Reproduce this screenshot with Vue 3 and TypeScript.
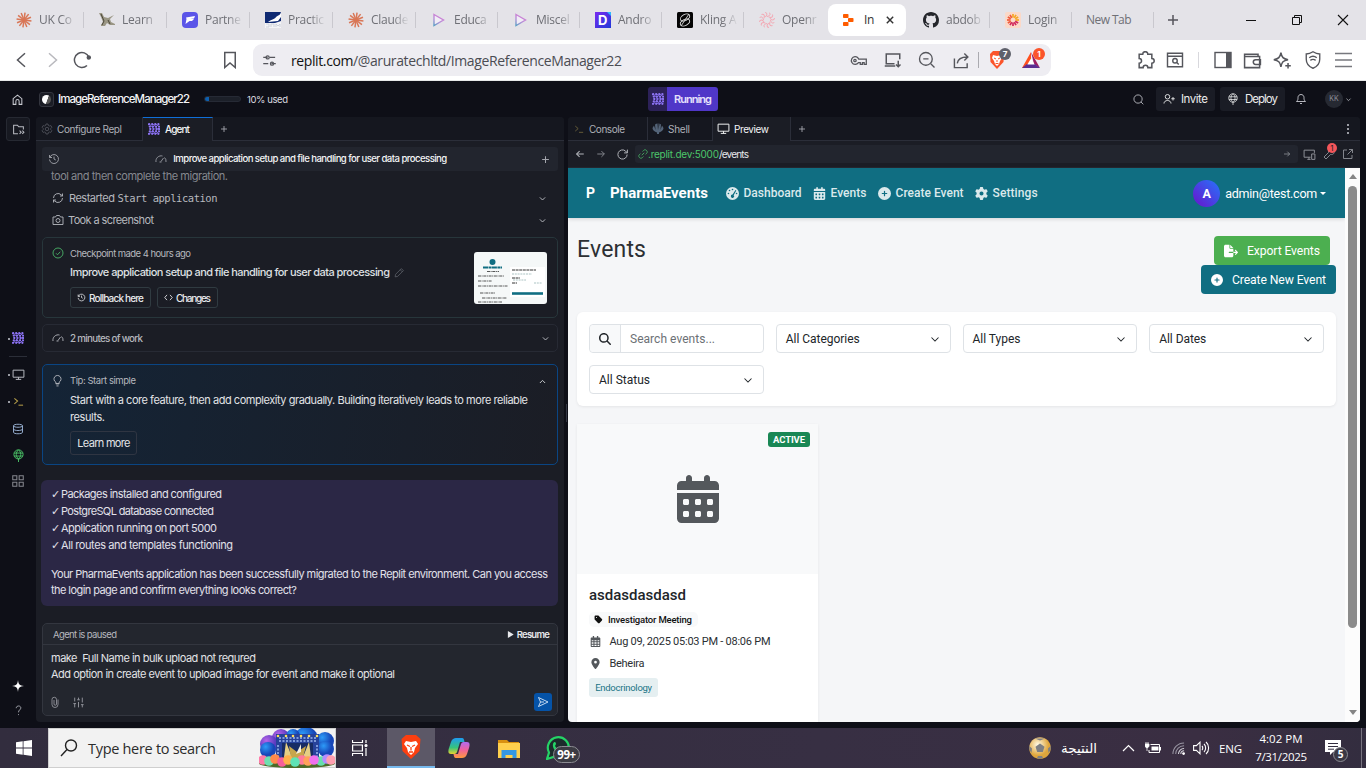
<script setup lang="ts">
import { h } from 'vue'
import type { Directive, FunctionalComponent } from 'vue'

interface Glyph { box?: string; fill?: boolean; d: string[] }

const glyphs: Record<string, Glyph> = {
  home: { d: ['M4 10.500 12 4l8 6.500V21h-5v-6a3 3 0 0 0-6 0v6H4z'] },
  folder: { d: ['M11 20H3V4h7l2.500 3H21v5', 'm14 14 3 3-3 3', 'm19 14 3 3-3 3'] },
  gear: { d: ['M12 8.500a3.500 3.500 0 1 0 0 7 3.500 3.500 0 0 0 0-7z', 'M10 2h4l.8 3 2 1 3-.8 2 3.400-2.200 2.200v2.400l2.200 2.200-2 3.400-3-.8-2 1-.8 3h-4l-.8-3-2-1-3 .8-2-3.400 2.200-2.200v-2.400L2.200 8.600l2-3.400 3 .8 2-1z'] },
  history: { d: ['M3 4v5h5', 'M3.500 9a9 9 0 1 1-.5 4', 'M12 7v5l3.500 2'] },
  gauge: { d: ['M2 18A10.500 10.500 0 0 1 15 6M19 9a10 10 0 0 1 3 9', 'm12 17 5-7', 'M9 18h4'] },
  plus: { d: ['M12 3v18M3 12h18'] },
  sync: { d: ['M3 12a9 9 0 0 1 15.500-6.200L21 8', 'M21 3v5h-5', 'M21 12a9 9 0 0 1-15.500 6.200L3 16', 'M3 21v-5h5'] },
  camera: { d: ['M2 6h5l2-3h6l2 3h5v15H2z', 'M12 9a4 4 0 1 0 0 8 4 4 0 0 0 0-8z'] },
  down: { d: ['m5 9 7 7 7-7'] },
  up: { d: ['m5 16 7-7 7 7'] },
  check: { d: ['M12 2a10 10 0 1 0 0 20 10 10 0 0 0 0-20z', 'm8 12.500 3 3 5.500-6'] },
  pencil: { d: ['M16 3.500 20.500 8 8 20.500 2.500 21.500 3.500 16z', 'm13.500 6 4.500 4.500'] },
  code: { d: ['m8 5-6 7 6 7', 'm16 5 6 7-6 7'] },
  bulb: { d: ['M9 18v-3a6.500 6.500 0 1 1 6 0v3z', 'M9 18h6M10 22h4'] },
  monitor: { d: ['M2 4h20v13H2z', 'M12 17v4M7 21h10'] },
  prompt: { d: ['m3 5 7 6-7 6', 'M12 20h10'] },
  db: { d: ['M3 5.500C3 1.500 21 1.500 21 5.500S3 9.500 3 5.500z', 'M3 5.500v13c0 4 18 4 18 0v-13', 'M3 12c0 4 18 4 18 0'] },
  globe: { d: ['M12 1.500a8.500 8.500 0 1 0 0 17 8.500 8.500 0 0 0 0-17z', 'M4 7.500h16M4 13h16', 'M12 1.500c-5.500 5-5.500 12 0 17 5.500-5 5.500-12 0-17z', 'M12 18v6'] },
  apps: { d: ['M3 3h7v7H3zM14 3h7v7h-7zM3 14h7v7H3zM14 14h7v7h-7z'] },
  spark: { fill: true, d: ['M12 0c1 9 3 11 12 12-9 1-11 3-12 12-1-9-3-11-12-12C9 11 11 9 12 0z'] },
  help: { d: ['M7 7c0-7 11-6 10 0-.6 3.500-5 4-5 9', 'M12 20v2'] },
  clip: { d: ['M18 7v10a6 6 0 0 1-12 0V7a4.500 4.500 0 0 1 9 0v9a2.500 2.500 0 0 1-5 0V8'] },
  sliders: { d: ['M5 3v7M5 14v7M12 3v4M12 11v10M19 3v9M19 16v5', 'M2.500 14h5M9.500 7h5M16.500 16h5'] },
  send: { d: ['M3 3 22 12 3 21 7 12z', 'M7 12h7'] },
  play: { fill: true, d: ['M3 0v24L23 12z'] },
  search: { d: ['M11 2a9 9 0 1 0 0 18 9 9 0 0 0 0-18z', 'm17.500 17.500 5 5'] },
  user: { d: ['M9 3a4.500 4.500 0 1 0 0 9 4.500 4.500 0 0 0 0-9z', 'M2 21c0-8 14-8 14 0', 'M20 8v7M16.500 11.500h7'] },
  bell: { d: ['M3 17c3-3 3-4 3-8 0-8 12-8 12 0 0 4 0 5 3 8z', 'M10 21h4'] },
  left: { d: ['M21 12H4', 'm11 5-7 7 7 7'] },
  right: { d: ['M3 12h17', 'm13 5 7 7-7 7'] },
  reload: { d: ['M20.500 12A8.500 8.500 0 1 1 17.500 5.500L21 9', 'M21 3v6h-6'] },
  link: { d: ['m9 15 6-6', 'm11 6 3-3c4-4 11 3 7 7l-3 3', 'm13 18-3 3c-4 4-11-3-7-7l3-3'] },
  devices: { d: ['M14 17H2V4h19v5', 'M8 21h6M11 17v4', 'M16 11h6v10h-6z'] },
  wrench: { d: ['m6 22 9-9c5 1 9-3 7-7l-4 3-3-3 3-4c-5-1-8 3-7 7l-9 9z'] },
  external: { d: ['M10 4H3v17h17v-7', 'M14 3h7v7', 'm11 13 10-10'] },
  shell: { fill: true, d: ['M10 22v-3c-5-1-9-5-9-9l3-5 3 9-1-11 4-2 1 13 0-13h2l0 13 2-13 3 2-1 11 3-9 3 5c0 4-4 8-9 9v3z'] },
  back: { d: ['m16 3-10 9 10 9'] },
  forward: { d: ['m8 3 10 9-10 9'] },
  bookmark: { d: ['M5 2h14v20l-7-6-7 6z'] },
  tune: { d: ['M9 7H2M22 17h-7', 'M12 7h9M2 17h8', 'M9 4.500a2.500 2.500 0 1 0 0 5 2.500 2.500 0 0 0 0-5z', 'M16 14.500a2.500 2.500 0 1 0 0 5 2.500 2.500 0 0 0 0-5z'] },
  key: { d: ['M7 6.500a5.500 5.500 0 1 0 5 8.500h2.500v2.500h3V15H20v2.500h3V10H12.300A5.500 5.500 0 0 0 7 6.500z', 'M7 10.300a1.700 1.700 0 1 0 0 3.400 1.700 1.700 0 0 0 0-3.400z'] },
  install: { d: ['M21 11V4H3v13h11', 'M1 20h14', 'M19 13v8M16 18l3 3 3-3'] },
  zoomout: { d: ['M10.500 2a8.500 8.500 0 1 0 0 17 8.500 8.500 0 0 0 0-17z', 'm17 17 5 5M7 10.500h7'] },
  share: { d: ['M2 9v13h18v-6', 'M6 16c1-7 6-9 14-9M16 2l5 5-5 5'] },
  puzzle: { d: ['M4 4h4.500a3.200 3.200 0 0 1 6.400 0H20v5.500a3 3 0 0 1 0 6V21h-5a3 3 0 0 0-6 0H4v-5.500a3 3 0 0 0 0-6z'] },
  findpage: { d: ['M2 3h20v18H2zM2 7h20', 'M12 10a3 3 0 1 0 0 6 3 3 0 0 0 0-6z', 'm14 15 3 3'] },
  wallet: { d: ['M2 7V4h17v3M2 7h19v14H2z', 'M22 11h-6a3 3 0 0 0 0 6h6z'] },
  star: { d: ['M10 2c1 6 3 8 9 9-6 1-8 3-9 9-1-6-3-8-9-9 6-1 8-3 9-9z', 'M19 15v7M15.500 18.500h7'] },
  shield: { d: ['M12 1c3 2 6 3 9 3v7c0 6-4 10-9 12-5-2-9-6-9-12V4c3 0 6-1 9-3z', 'M7 9c3-2.500 7-2.500 10 0M8.500 12.500c2-1.500 5-1.500 7 0M12 16h.1'] },
  calendar: { box: '0 0 448 512', fill: true, d: ['M128 0c17.700 0 32 14.300 32 32V64H288V32c0-17.700 14.300-32 32-32s32 14.300 32 32V64h48c26.500 0 48 21.500 48 48v48H0V112C0 85.500 21.500 64 48 64H96V32c0-17.700 14.300-32 32-32zM0 192H448V464c0 26.500-21.500 48-48 48H48c-26.500 0-48-21.500-48-48V192zm64 80v32c0 8.800 7.200 16 16 16h32c8.800 0 16-7.200 16-16V272c0-8.800-7.200-16-16-16H80c-8.800 0-16 7.200-16 16zm128 0v32c0 8.800 7.200 16 16 16h32c8.800 0 16-7.200 16-16V272c0-8.800-7.200-16-16-16H208c-8.800 0-16 7.200-16 16zm144-16c-8.800 0-16 7.200-16 16v32c0 8.800 7.200 16 16 16h32c8.800 0 16-7.200 16-16V272c0-8.800-7.200-16-16-16H336zM64 400v32c0 8.800 7.200 16 16 16h32c8.800 0 16-7.200 16-16V400c0-8.800-7.200-16-16-16H80c-8.800 0-16 7.200-16 16zm144-16c-8.800 0-16 7.200-16 16v32c0 8.800 7.200 16 16 16h32c8.800 0 16-7.200 16-16V400c0-8.800-7.200-16-16-16H208zm112 16v32c0 8.800 7.200 16 16 16h32c8.800 0 16-7.200 16-16V400c0-8.800-7.200-16-16-16H336c-8.800 0-16 7.200-16 16z'] },
  calgrid: { box: '0 0 448 512', fill: true, d: ['M96 0h64v64h128V0h64v64h48c26 0 48 21 48 48v352c0 26-22 48-48 48H48c-26 0-48-22-48-48V112c0-27 22-48 48-48h48zM48 192v56h80v-56zm128 0v56h96v-56zm144 0v56h80v-56zM48 296v64h80v-64zm128 0v64h96v-64zm144 0v64h80v-64zM48 408v56h80v-56zm128 0v56h96v-56zm144 0v56h80v-56z'] },
  glass: { box: '0 0 512 512', fill: true, d: ['M416 208c0 45.900-14.900 88.300-40 122.700L502.600 457.400c12.500 12.500 12.500 32.800 0 45.300s-32.800 12.500-45.300 0L330.700 376c-34.400 25.200-76.800 40-122.700 40C93.100 416 0 322.900 0 208S93.100 0 208 0S416 93.100 416 208zM208 352a144 144 0 1 0 0-288 144 144 0 1 0 0 288z'] },
  addcircle: { box: '0 0 512 512', fill: true, d: ['M256 512A256 256 0 1 0 256 0a256 256 0 1 0 0 512zM232 344V280H168c-13.300 0-24-10.700-24-24s10.700-24 24-24h64V168c0-13.300 10.700-24 24-24s24 10.700 24 24v64h64c13.300 0 24 10.700 24 24s-10.700 24-24 24H280v64c0 13.300-10.700 24-24 24s-24-10.700-24-24z'] },
  pin: { box: '0 0 384 512', fill: true, d: ['M215.700 499.200C267 435 384 279.400 384 192C384 86 298 0 192 0S0 86 0 192c0 87.400 117 243 168.300 307.200c12.300 15.300 35.100 15.300 47.400 0zM192 128a64 64 0 1 1 0 128 64 64 0 1 1 0-128z'] },
  tag: { box: '0 0 448 512', fill: true, d: ['M0 80V229.500c0 17 6.700 33.300 18.700 45.300l176 176c25 25 65.500 25 90.500 0L418.700 317.300c25-25 25-65.500 0-90.500l-176-176c-12-12-28.300-18.700-45.300-18.700H48C21.500 32 0 53.500 0 80zm112 32a32 32 0 1 1 0 64 32 32 0 1 1 0-64z'] },
  cog: { box: '0 0 512 512', fill: true, d: ['M495.900 166.600c3.200 8.700 .5 18.400-6.400 24.600l-43.300 39.400c1.100 8.300 1.700 16.800 1.700 25.400s-.6 17.100-1.700 25.400l43.300 39.400c6.900 6.200 9.600 15.900 6.400 24.600c-4.400 11.900-9.700 23.300-15.800 34.300l-4.700 8.100c-6.600 11-14 21.400-22.100 31.200c-5.900 7.200-15.700 9.600-24.500 6.800l-55.700-17.700c-13.400 10.300-28.200 18.900-44 25.400l-12.500 57.100c-2 9.100-9 16.300-18.200 17.800c-13.800 2.300-28 3.500-42.500 3.500s-28.700-1.200-42.500-3.500c-9.200-1.500-16.200-8.700-18.200-17.800l-12.500-57.100c-15.800-6.500-30.600-15.100-44-25.400L83.100 425.900c-8.800 2.800-18.600 .3-24.500-6.800c-8.100-9.800-15.500-20.200-22.100-31.200l-4.700-8.100c-6.100-11-11.400-22.400-15.800-34.300c-3.200-8.700-.5-18.400 6.400-24.600l43.300-39.400C64.600 273.100 64 264.600 64 256s.6-17.100 1.700-25.400L22.400 191.200c-6.900-6.200-9.600-15.900-6.400-24.600c4.400-11.900 9.700-23.300 15.800-34.300l4.700-8.100c6.600-11 14-21.400 22.100-31.200c5.900-7.200 15.700-9.600 24.500-6.800l55.700 17.700c13.400-10.300 28.200-18.900 44-25.400l12.500-57.100c2-9.100 9-16.300 18.200-17.800C227.300 1.200 241.500 0 256 0s28.700 1.200 42.500 3.500c9.200 1.500 16.200 8.700 18.200 17.800l12.500 57.100c15.800 6.500 30.600 15.100 44 25.400l55.700-17.700c8.800-2.800 18.600-.3 24.500 6.800c8.100 9.800 15.500 20.200 22.100 31.200l4.700 8.100c6.100 11 11.400 22.400 15.800 34.300zM256 336a80 80 0 1 0 0-160 80 80 0 1 0 0 160z'] },
  dash: { box: '0 0 24 24', fill: true, d: ['M12 0a12 12 0 1 0 0 24 12 12 0 0 0 0-24zM12 3a1.500 1.500 0 1 1 0 3 1.500 1.500 0 0 1 0-3zM6.500 5a1.500 1.500 0 1 1 0 3 1.500 1.500 0 0 1 0-3zM4.500 10.500a1.500 1.500 0 1 1 0 3 1.500 1.500 0 0 1 0-3zM19.500 10.500a1.500 1.500 0 1 1 0 3 1.500 1.500 0 0 1 0-3zM17.500 5.500l1.500 1-4.800 8.500a3 3 0 1 1-2-1z'] },
  exportfile: { box: '0 0 576 512', fill: true, d: ['M0 64C0 29 29 0 64 0h160v128c0 18 14 32 32 32h128v128H216c-13 0-24 11-24 24s11 24 24 24h168v112c0 35-29 64-64 64H64c-35 0-64-29-64-64zM384 336v-48h110l-39-39c-10-10-10-25 0-34s24-9 34 0l80 80c9 9 9 24 0 34l-80 80c-10 9-25 9-34 0s-10-25 0-34l39-39zM384 128H256V0z'] },
  github: { box: '0 0 16 16', fill: true, d: ['M8 0C3.580 0 0 3.580 0 8c0 3.540 2.290 6.530 5.470 7.590.4.070.55-.17.55-.38 0-.19-.01-.82-.01-1.490-2.010.37-2.530-.49-2.690-.94-.09-.23-.48-.94-.82-1.130-.28-.15-.68-.52-.01-.53.63-.01 1.080.58 1.230.82.72 1.210 1.870.87 2.330.66.07-.52.28-.87.51-1.070-1.780-.2-3.640-.89-3.640-3.950 0-.87.31-1.590.82-2.150-.08-.2-.36-1.020.08-2.120 0 0 .67-.21 2.200.82.64-.18 1.320-.27 2-.27s1.360.09 2 .27c1.530-1.040 2.200-.82 2.200-.82.44 1.100.16 1.920.08 2.120.51.56.82 1.270.82 2.150 0 3.070-1.870 3.750-3.650 3.950.29.25.54.73.54 1.480 0 1.070-.01 1.930-.01 2.200 0 .21.15.46.55.38A8.010 8.010 0 0 0 16 8c0-4.420-3.580-8-8-8z'] },
}

const Ic: FunctionalComponent<{ n: string; s?: number; w?: number }> = (props) => {
  const g = glyphs[props.n]
  const size = props.s ?? 12
  return h(
    'svg',
    {
      viewBox: g.box ?? '0 0 24 24', width: size, height: size,
      fill: g.fill ? 'currentColor' : 'none', stroke: g.fill ? 'none' : 'currentColor',
      'stroke-width': props.w ?? 1.8, 'fill-rule': 'evenodd',
    },
    g.d.map((d) => h('path', { d })),
  )
}
Ic.props = ['n', 's', 'w']

const shifts = [0, 0.7, 1.2, 0.7, 0]
const agentDots: number[][] = []
shifts.forEach((shift, row) => {
  for (let col = 0; col < 4; col++) agentDots.push([Math.min(11, 1.1 + col * 3.1 + shift), 1.2 + row * 2.4])
})
const AgentMark: FunctionalComponent = () =>
  h('svg', { viewBox: '0 0 12 12', width: 12, height: 12, fill: 'none', stroke: '#8168ec', 'stroke-width': 0.9 }, [
    ...agentDots.map(([x, y]) => h('circle', { cx: x, cy: y, r: 1.15, fill: '#8f76f5', stroke: 'none' })),
    h('path', { d: 'M1.500 1 6 6l-4.500 5M5 1l4.500 5L5 11M8 1l3 3M8 11l3-3' }),
  ])

// Adjusts tracking so that a label spans the given number of pixels.
const vFit: Directive<HTMLElement, number> = {
  mounted(el, binding) {
    const width = el.getBoundingClientRect().width
    const count = (el.textContent ?? '').trim().length
    if (count > 1) el.style.letterSpacing = `${(binding.value - width) / (count - 1)}px`
  },
}

const tabs = [
  { icon: 'burst', label: 'UK Co' }, { icon: 'learn', label: 'Learn' }, { icon: 'partner', label: 'Partne' },
  { icon: 'practic', label: 'Practic' }, { icon: 'burst', label: 'Claude' }, { icon: 'playmark', label: 'Educa' },
  { icon: 'playmark', label: 'Miscel' }, { icon: 'dmark', label: 'Andro' }, { icon: 'kling', label: 'Kling A' },
  { icon: 'swirl', label: 'Openr' }, { icon: 'replit', label: 'In', active: true }, { icon: 'github', label: 'abdob' },
  { icon: 'login', label: 'Login' }, { icon: '', label: 'New Tab' },
]
const rays = Array.from({ length: 12 }, (_, i) => i * 30)
const selects = [
  { label: 'All Categories', width: 74 }, { label: 'All Types', width: 48 }, { label: 'All Dates', width: 47 }, { label: 'All Status', width: 51 },
]
const done = [
  { text: 'Packages installed and configured', width: 161 }, { text: 'PostgreSQL database connected', width: 153 },
  { text: 'Application running on port 5000', width: 156 }, { text: 'All routes and templates functioning', width: 172 },
]
const balloons = [
  { x: 3, y: 33, c: '#ff7aa8' }, { x: 9, y: 34, c: '#6ee0b0' }, { x: 15, y: 32, c: '#ff8a4c' }, { x: 22, y: 35, c: '#f75f9b' },
  { x: 28, y: 33, c: '#ffb04a' }, { x: 42, y: 33, c: '#ff7a9c' }, { x: 48, y: 34, c: '#ffa25a' }, { x: 35, y: 35, c: '#5fe3b5' },
  { x: 61, y: 34, c: '#66dfad' }, { x: 54, y: 33, c: '#f070ee' }, { x: 67, y: 32, c: '#b38cff' }, { x: 71, y: 33, c: '#ff9fb0' },
]
</script>

<template>
  <div class="screen">
    <div class="tabstrip">
      <div v-for="(t, i) in tabs" :key="i" class="btab" :class="{ on: t.active, pre: i === 9, bare: !t.icon }">
        <span v-if="t.icon" class="fav" :class="t.icon">
          <svg v-if="t.icon === 'burst'" viewBox="-8 -8 16 16"><path v-for="r in rays" :key="r" d="M0 0V-7.500" stroke="#d97757" stroke-width="1.500" :transform="`rotate(${r + 8})`" /></svg>
          <svg v-else-if="t.icon === 'learn'" viewBox="0 0 16 16"><path d="M0 1h3l2 4 4 1 6-3-4 4 1 3 4 2v1h-5l-3-2-2 3H2v-1l2-3-2-5z" fill="#9a9684" /><path d="m2 2 3 7-2 4M9 8l2 4" stroke="#4a4638" fill="none" /></svg>
          <svg v-else-if="t.icon === 'partner'" viewBox="0 0 16 16"><rect width="16" height="16" rx="4" fill="#5b55e8" /><path d="M4 5.500 13 4l-1 2.500-4 .5h4l-2 2H7.500l-4 3 1-5z" fill="#fff" /></svg>
          <svg v-else-if="t.icon === 'practic'" viewBox="0 0 16 16"><path d="M0 0h16v16H0z" fill="#f4f4f6" /><path d="M0 0h16v9L10 11H0z" fill="#0f2a73" /><path d="M16 0c-1 4-3 3-5 5-1 2-4 2-8 5l10-1 3-4z" fill="#fff" /><path d="M1 12h3v3H1M6 15v-3h3v3M11 15v-3l2 2 2-2v3" stroke="#cfd3dc" fill="none" /></svg>
          <svg v-else-if="t.icon === 'playmark'" viewBox="0 0 16 16"><defs><linearGradient id="pg" x1=".5" y1="0" x2="0" y2="1"><stop stop-color="#d47bd4" /><stop offset=".5" stop-color="#b78fd8" /><stop offset="1" stop-color="#5b9fc4" /></linearGradient></defs><path d="M3 2.500 12.500 8 3 13.500z" fill="#f1edf6" stroke="url(#pg)" stroke-width="1.400" /></svg>
          <svg v-else-if="t.icon === 'dmark'" viewBox="0 0 16 16"><defs><linearGradient id="dg" x2="1" y2="1"><stop stop-color="#7a2cf0" /><stop offset="1" stop-color="#2038d8" /></linearGradient></defs><path d="M0 0h16v16H0z" fill="url(#dg)" /><path d="M12 0h4v4z" fill="#30b8ff" /><text x="3" y="12.600" font-size="13" font-weight="700" fill="#fff" font-family="Inter, sans-serif">D</text></svg>
          <svg v-else-if="t.icon === 'kling'" viewBox="0 0 16 16"><rect width="16" height="16" rx="1.500" fill="#050505" /><g fill="none" stroke="#ddd" stroke-width=".9"><ellipse cx="8" cy="5.500" rx="5" ry="3" transform="rotate(-30 8 5.500)" /><ellipse cx="8" cy="10.500" rx="5" ry="3" transform="rotate(-30 8 10.500)" /><path d="m12 2-8 12" /></g></svg>
          <svg v-else-if="t.icon === 'swirl'" viewBox="-8 -8 16 16"><path v-for="r in rays" :key="r" d="M0-3.500C3-4 4-6 2-7.500" fill="none" stroke="#f3a9b4" :transform="`rotate(${r})`" /></svg>
          <svg v-else-if="t.icon === 'replit'" viewBox="0 0 16 16" fill="#ff5c00"><rect x="2" y="2" width="5.500" height="4" rx=".8" /><rect x="7" y="6" width="5.500" height="4" rx=".8" /><rect x="2" y="10" width="5.500" height="4" rx=".8" /></svg>
          <Ic v-else-if="t.icon === 'github'" n="github" :s="16" />
          <svg v-else viewBox="-8 -8 16 16"><rect x="-8" y="-8" width="16" height="16" rx="2" fill="#fbd9c8" /><path v-for="r in rays" :key="r" d="M0-2.500V-6" :stroke="r < 120 ? '#f5a623' : r < 240 ? '#d1265b' : '#ef5a3c'" stroke-width="1.700" :transform="`rotate(${r})`" /></svg>
        </span>
        <span class="blabel">{{ t.label }}</span>
        <svg v-if="t.active" class="bx" viewBox="0 0 10 10"><path d="m1 1 8 8M9 1 1 9" stroke="#333" stroke-width="1.800" /></svg>
      </div>
      <svg class="newtab" viewBox="0 0 12 12"><path d="M6 1v10M1 6h10" stroke="#55565c" stroke-width="1.500" /></svg>
      <div class="winbtns">
        <svg viewBox="0 0 12 12"><path d="M1 6.500h10" stroke="#111" /></svg>
        <svg viewBox="0 0 12 12" fill="none" stroke="#111"><path d="M1.500 3.500h7v7h-7zM3.500 3.500v-2h7v7h-2" /></svg>
        <svg viewBox="0 0 12 12"><path d="m1 1 10 10M11 1 1 11" stroke="#111" stroke-width="1.100" /></svg>
      </div>
    </div>

    <div class="toolbar">
      <div class="nav">
        <Ic n="back" :s="18" :w="2" /><Ic n="forward" :s="18" :w="2" class="dim" />
        <svg viewBox="0 0 18 18" width="18" height="18" fill="none" stroke="#55565c" stroke-width="1.500"><path d="M14 14.500A7.500 7.500 0 1 1 15.800 6" /><circle cx="15.800" cy="6.500" r="1.500" fill="#55565c" /></svg>
      </div>
      <Ic n="bookmark" :s="18" :w="2" />
      <div class="omni">
        <Ic n="tune" :s="15" :w="2" />
        <span class="addr"><span v-fit="331"><b>replit.com</b>/@aruratechltd/ImageReferenceManager22</span></span>
        <Ic n="key" :s="17" :w="1.8" class="k1" /><Ic n="install" :s="18" :w="2" class="k2" /><Ic n="zoomout" :s="18" :w="1.8" class="k3" /><Ic n="share" :s="17" :w="2" class="k4" />
        <i class="bar"></i>
        <span class="brave">
          <svg viewBox="0 0 16 18" width="16" height="18"><path d="M4 0h8l3 3-.500 8L8 18l-6.500-7L1 3z" fill="#fb542b" /><path d="m4 4 4 1 4-1 1 3-2 3-1 3-2 2-2-2-1-3-2-3z" fill="#fff" /><path d="m5 7 2 1M11 7 9 8M8 9v2M6.500 12.500h3" stroke="#fb542b" /></svg>
          <em>7</em>
        </span>
        <span class="bat">
          <svg viewBox="0 0 18 16" width="18" height="16"><path d="M9 0 0 16h9z" fill="#ff4f1e" /><path d="m9 0 9 16-6-4z" fill="#9e1f63" /><path d="M0 16h18l-5-4H5z" fill="#5b2e91" /><path d="m9 6.500-3.700 6h7.400z" fill="#fff" /></svg>
          <em>1</em>
        </span>
      </div>
      <div class="tools">
        <Ic n="puzzle" :s="19" :w="1.900" /><Ic n="findpage" :s="18" :w="1.900" class="t2" /><i></i>
        <svg viewBox="0 0 18 18" width="18" height="18"><rect x="1" y="1.500" width="16" height="15" fill="none" stroke="#55565c" stroke-width="1.400" /><path d="M12 2h5v14h-5z" fill="#55565c" /></svg>
        <Ic n="wallet" :s="19" :w="1.900" class="t4" /><Ic n="star" :s="19" :w="1.900" class="t4" /><Ic n="shield" :s="18" :w="1.800" class="t5" />
        <svg viewBox="0 0 18 16" width="18" height="16" class="t6"><path d="M0 1.500h17M0 8h17M0 14.500h17" stroke="#77787e" stroke-width="1.700" /></svg>
      </div>
    </div>

    <div class="ide">
      <div class="idehead">
        <div class="hl">
          <Ic n="home" :s="13" :w="1.900" />
          <span class="logo"><i></i></span>
          <span v-fit="132" class="proj">ImageReferenceManager22</span>
          <span class="meter"><i></i></span>
          <span v-fit="41" class="used">10% used</span>
        </div>
        <div class="run"><span class="runmark"><AgentMark /></span><span class="runtext"><span v-fit="38">Running</span></span></div>
        <div class="hr">
          <Ic n="search" :s="11" />
          <span class="hbtn inv"><Ic n="user" :s="12" /><span v-fit="27">Invite</span></span>
          <span class="hbtn dep"><Ic n="globe" :s="12" :w="1.500" /><span v-fit="33">Deploy</span></span>
          <Ic n="bell" :s="12" class="hb" />
          <span class="kk">KK</span><Ic n="down" :s="7" :w="2.500" class="hc" />
        </div>
      </div>

      <div class="work">
        <div class="rail">
          <span class="rbox"><Ic n="folder" :s="13" :w="1.900" /></span>
          <div class="rlist">
            <span class="ri dot"><AgentMark /></span>
            <hr />
            <span class="ri dot"><Ic n="monitor" :s="13" /></span>
            <span class="ri dot gold"><Ic n="prompt" :s="11" :w="2.200" /></span>
            <span class="ri blue"><Ic n="db" :s="12" /></span>
            <span class="ri leaf"><Ic n="globe" :s="13" :w="1.700" /></span>
            <span class="ri grey"><Ic n="apps" :s="14" :w="1.800" /></span>
          </div>
          <span class="ri star"><Ic n="spark" :s="12" /></span>
          <span class="ri"><Ic n="help" :s="11" /></span>
        </div>

        <section class="pane lpane">
          <div class="ptabs">
            <span class="pt cfg"><Ic n="gear" :s="12" :w="1.500" class="dimmer" /><span v-fit="65">Configure Repl</span></span>
            <span class="pt agent"><AgentMark /><span v-fit="25">Agent</span></span>
            <span class="pplus"><Ic n="plus" :s="8" :w="2.500" /></span>
          </div>
          <div class="chathead"><Ic n="history" :s="12" /><div class="mid"><Ic n="gauge" :s="12" /><span v-fit="274">Improve application setup and file handling for user data processing</span></div><Ic n="plus" :s="9" :w="2.700" /></div>
          <div class="chat">
            <div class="cut"><span v-fit="177">tool and then complete the migration.</span></div>
            <div class="step"><Ic n="sync" :s="12" /><span v-fit="46">Restarted</span><code v-fit="100">Start application</code><Ic n="down" :s="9" :w="2.600" class="end" /></div>
            <div class="step"><Ic n="camera" :s="12" /><span v-fit="86" class="s2">Took a screenshot</span><Ic n="down" :s="9" :w="2.600" class="end" /></div>

            <div class="check">
              <Ic n="check" :s="12" class="ok" />
              <div class="cbody">
                <div class="clabel"><span v-fit="121">Checkpoint made 4 hours ago</span></div>
                <div class="ctitle"><span v-fit="320">Improve application setup and file handling for user data processing</span><Ic n="pencil" :s="11" :w="1.600" /></div>
                <div class="cbtns"><span class="b1"><Ic n="history" :s="9" :w="2" /><span v-fit="55">Rollback here</span></span><span class="b2"><Ic n="code" :s="9" :w="2.300" /><span v-fit="35">Changes</span></span></div>
              </div>
              <svg class="thumb" viewBox="0 0 73 52">
                <rect width="73" height="52" rx="3" fill="#f5f8f8" /><circle cx="18.500" cy="10" r="3" fill="#106e82" />
                <path d="M9 15.500h19" stroke="#106e82" stroke-width="2" stroke-dasharray="5 .5 3 .4" />
                <path d="M4 24h26M4 29h14M4 34h30M6 41h15M8 46h25M4 50h24M13 19.500h12" stroke="#444" stroke-width=".9" stroke-dasharray="3 .6 1 .7" />
                <rect x="36" y="15" width="35" height="30" fill="#fff" /><path d="M38 18h24M38 26h8M38 31h5" stroke="#333" stroke-dasharray="3 .6" /><path d="M38 41.500h31" stroke="#106e82" stroke-width="2.600" /><path d="M38 22h20M39 28h13M60 31h8" stroke="#8aa" stroke-width=".7" stroke-dasharray="2 .8" />
              </svg>
            </div>

            <div class="mins"><Ic n="gauge" :s="12" /><span v-fit="73">2 minutes of work</span><Ic n="down" :s="9" :w="2.600" class="end" /></div>

            <div class="tip">
              <Ic n="bulb" :s="13" :w="1.500" />
              <div class="tbody">
                <div class="tlabel"><span v-fit="66">Tip: Start simple</span></div>
                <div class="ttext"><span v-fit="458">Start with a core feature, then add complexity gradually. Building iteratively leads to more reliable</span><br /><span v-fit="35">results.</span></div>
                <span class="tbtn"><span v-fit="53">Learn more</span></span>
              </div>
              <Ic n="up" :s="9" :w="2.600" />
            </div>

            <div class="msg">
              <div v-for="d in done" :key="d.text" class="ml"><i>✓</i><span v-fit="d.width">{{ d.text }}</span></div>
              <div class="mp"><span v-fit="497">Your PharmaEvents application has been successfully migrated to the Replit environment. Can you access</span><br /><span v-fit="246">the login page and confirm everything looks correct?</span></div>
            </div>
          </div>

          <div class="compose">
            <div class="chead"><span v-fit="64">Agent is paused</span><span class="res"><Ic n="play" :s="7" /><span v-fit="33">Resume</span></span></div>
            <div class="ctext"><span v-fit="205">make&nbsp; Full Name in bulk upload not requred</span><br /><span v-fit="344">Add option in create event to upload image for event and make it optional</span></div>
            <div class="cfoot"><Ic n="clip" :s="12" :w="1.700" /><Ic n="sliders" :s="13" :w="1.700" /><span class="send"><Ic n="send" :s="12" :w="1.800" /></span></div>
          </div>
        </section>

        <div class="gutter"><i></i></div>

        <section class="pane rpane">
          <div class="ptabs">
            <span class="pt con"><Ic n="prompt" :s="10" class="goldd" /><span v-fit="36">Console</span></span>
            <span class="pt she"><Ic n="shell" :s="12" class="shc" /><span v-fit="22">Shell</span></span>
            <span class="pt pre2"><Ic n="monitor" :s="13" /><span v-fit="35">Preview</span></span>
            <span class="pplus"><Ic n="plus" :s="8" :w="2.500" /></span>
            <span class="kebab"><i></i><i></i><i></i></span>
          </div>
          <div class="urlbar">
            <Ic n="left" :s="10" :w="2.500" /><Ic n="right" :s="10" :w="2.300" class="r" /><Ic n="reload" :s="13" />
            <div class="url"><Ic n="link" :s="10" class="lk" /><span class="host"><span v-fit="71">.replit.dev:5000</span></span><span v-fit="30" class="path">/events</span><Ic n="right" :s="8" :w="2.200" class="go" /></div>
            <Ic n="devices" :s="13" class="d1" /><span class="wr"><Ic n="wrench" :s="12" /><em>1</em></span><Ic n="external" :s="12" class="ex" />
          </div>

          <div class="view">
            <div class="page">
              <nav class="topnav">
                <b class="p">P</b><b v-fit="98" class="brand">PharmaEvents</b>
                <span class="ni n1"><Ic n="dash" :s="13" /><span v-fit="58">Dashboard</span></span>
                <span class="ni n2"><Ic n="calendar" :s="13" /><span v-fit="36">Events</span></span>
                <span class="ni n3"><Ic n="addcircle" :s="13" /><span v-fit="68">Create Event</span></span>
                <span class="ni n4"><Ic n="cog" :s="13" /><span v-fit="45">Settings</span></span>
                <span class="ava">A</span><span v-fit="92" class="mail">admin@test.com</span><i class="caret"></i>
              </nav>
              <div class="phead">
                <h2><span v-fit="69">Events</span></h2>
                <div class="pbtns">
                  <span class="pb export"><Ic n="exportfile" :s="14" /><span v-fit="73">Export Events</span></span>
                  <span class="pb create"><Ic n="addcircle" :s="12" /><span v-fit="94">Create New Event</span></span>
                </div>
              </div>
              <div class="filters">
                <div class="sbox"><span><Ic n="glass" :s="12" /></span><label><span v-fit="85">Search events...</span></label></div>
                <div v-for="s in selects" :key="s.label" class="sel"><span v-fit="s.width">{{ s.label }}</span><Ic n="down" :s="12" :w="2.100" /></div>
              </div>
              <article class="card">
                <div class="pic"><Ic n="calendar" :s="48" /><span class="act"><span v-fit="32">ACTIVE</span></span></div>
                <div class="cb">
                  <h5><span v-fit="97">asdasdasdasd</span></h5>
                  <span class="cat"><Ic n="tag" :s="9" /><span v-fit="84">Investigator Meeting</span></span>
                  <div class="row"><Ic n="calgrid" :s="11" /><span v-fit="161">Aug 09, 2025 05:03 PM - 08:06 PM</span></div>
                  <div class="row r2"><Ic n="pin" :s="11" /><span v-fit="35">Beheira</span></div>
                  <span class="topic"><span v-fit="57">Endocrinology</span></span>
                </div>
              </article>
            </div>
            <div class="scroll"><i class="su"></i><i class="thumbbar"></i><i class="sd"></i></div>
          </div>
        </section>
      </div>
    </div>

    <div class="taskbar">
      <span class="start"><svg viewBox="0 0 16 16" width="16" height="16" fill="#fff"><path d="M0 2.200 6.700 1.300v6.300H0zM7.500 1.200 16 0v7.600H7.500zM0 8.400h6.700v6.300L0 13.800zM7.500 8.400H16V16l-8.500-1.200z" /></svg></span>
      <div class="tsearch">
        <svg viewBox="0 0 18 18" width="18" height="18" fill="none" stroke="#222" stroke-width="1.400"><circle cx="11" cy="6.500" r="5.500" /><path d="m7 10.500-6 6.500" /></svg>
        <div class="ttype"><span v-fit="128">Type here to search</span></div>
        <svg viewBox="0 0 76 40" width="76" height="40">
          <defs>
            <radialGradient id="bb" cx=".35" cy=".3"><stop stop-color="#2d9bf8" /><stop offset="1" stop-color="#1746b8" /></radialGradient>
            <radialGradient id="bp" cx=".35" cy=".3"><stop stop-color="#b765e8" /><stop offset="1" stop-color="#5b3cc0" /></radialGradient>
          </defs>
          <ellipse cx="38" cy="35.500" rx="38" ry="4.500" fill="#4d6b28" />
          <circle cx="22" cy="10" r="9" fill="url(#bp)" /><circle cx="47" cy="11" r="12" fill="url(#bb)" /><circle cx="66" cy="13" r="9" fill="url(#bb)" />
          <circle cx="10" cy="16" r="9" fill="url(#bp)" /><circle cx="9" cy="22" r="8" fill="url(#bb)" /><circle cx="67" cy="21" r="8" fill="url(#bb)" /><circle cx="34" cy="8" r="7" fill="url(#bb)" />
          <rect x="17" y="6" width="43" height="27" fill="#27429b" /><path d="M20 10h37M20 13h37M19 17v14M58 17v14" stroke="#9fb9ef" stroke-width="1.500" stroke-dasharray="2 1.500" />
          <rect x="23" y="15" width="31" height="16" fill="#182c64" /><path d="m27 14 6 15h-8zM50 14l-6 15h8z" fill="#e6cf83" /><path d="m30 18 8 6 9-6-3 12H32z" fill="#c7a64c" /><path d="m42 16-5 10 5-2z" fill="#f4f1e6" />
          <circle v-for="x in [19, 27, 34, 42, 50, 58]" :key="x" :cx="x" cy="8" r="1.300" fill="#ffe05c" />
          <circle v-for="b in balloons" :key="b.x" :cx="b.x + 1" :cy="b.y - 1" r="4.800" :fill="b.c" />
        </svg>
      </div>
      <span class="tb tv"><svg viewBox="0 0 16 16" width="16" height="16" fill="none" stroke="#fff" stroke-width="1.200"><path d="M.5 0v2.500h10V0M.5 16v-2.500h10V16M.6 5h9.800v6H.6zM14 0v3M14 8v8" /><circle cx="14" cy="5.500" r="1" fill="#fff" /></svg></span>
      <span class="tb onapp"><svg viewBox="0 0 20 24" width="20" height="24"><path d="M5 0h10l4.500 4-1 12L10 24l-8.500-8L.5 4z" fill="#fb3f10" /><path d="m5 6 5 1 5-1 2 3-3 4-1 4-3 3-3-3-1-4-3-4z" fill="#fff" /><path d="m6 10 3 1.500M14 10l-3 1.500M10 12v3.500M8 17h4" stroke="#fb3f10" stroke-width="1.300" /></svg></span>
      <span class="tb"><svg viewBox="0 0 22 20" width="22" height="20"><defs><linearGradient id="ca" x2="0" y2="1"><stop stop-color="#1e9bf0" /><stop offset=".6" stop-color="#36c47c" /><stop offset="1" stop-color="#e8d32e" /></linearGradient><linearGradient id="cc" x2="0" y2="1"><stop stop-color="#b06bf0" /><stop offset=".5" stop-color="#f0629a" /><stop offset="1" stop-color="#ff9a3d" /></linearGradient></defs><path d="M8 0h6c2 0 2 2 2.500 4H12L9 14c-1 2-2 2-4 2H3c-3 0-3-3-2-6l2-6c1-3 3-4 5-4z" fill="url(#ca)" /><path d="M14 20H8c-2 0-2-2-2.500-4H10l3-10c1-2 2-2 4-2h2c3 0 3 3 2 6l-2 6c-1 3-3 4-5 4z" fill="url(#cc)" /></svg></span>
      <span class="tb fo"><svg viewBox="0 0 22 19" width="22" height="19"><path d="M0 1h9l2 2h10v3H0z" fill="#d99010" /><path d="M0 4h22v15H0z" fill="#ffcf4d" /><path d="M3.500 11h15v8h-4v-3h-7v3h-4z" fill="#3497e3" /></svg></span>
      <span class="tb wa"><svg viewBox="0 0 24 24" width="24" height="24"><path d="M1 23 3 16.500A10.500 10.500 0 1 1 7.500 21z" fill="#1c2c2c" stroke="#25d366" stroke-width="2.200" /><path d="M7 8c1-3 3-2 3 0l-1 2c1 2 3 3 4 4l2-1c3 1 2 4-1 4-4 0-8-5-7-9z" fill="#25d366" /></svg><em>99+</em></span>
      <div class="tray">
        <svg viewBox="0 0 22 22" width="22" height="22"><defs><radialGradient id="bl" cx=".4" cy=".35"><stop stop-color="#fffbe8" /><stop offset="1" stop-color="#dfa63c" /></radialGradient></defs><circle cx="11" cy="11" r="10.800" fill="url(#bl)" /><path d="m11 6.500 4.500 3.300-1.700 5.200H8.200L6.500 9.800zM6 1.500h10L11 3.500zM.3 9 3 11.500 2.500 16C1 14 0 12 .3 9zM21.700 9 19 11.500l.5 4.500c1.500-2 2.500-4 2.200-7zM8 21l1-2h4l1 2c-2 .8-4 .8-6 0z" fill="#7d7f83" /></svg>
        <span class="ar" dir="rtl">النتيجة</span>
        <svg class="tc" viewBox="0 0 12 12" width="13" height="12" fill="none" stroke="#fff" stroke-width="1.200"><path d="m.5 9 5.500-5.500L11.500 9" /></svg>
        <svg class="tbt" viewBox="0 0 16 12" width="16" height="12"><path d="M6.500 4.500h7v4h-7z" fill="#fff" /><path d="M5.500 2.500h9v8H4V8M15.500 5v3.500" stroke="#fff" fill="none" /><path d="M0 2h4v2.500L2 6 0 4.500zM1 0v2M3 0v2M2 5v4" fill="#fff" stroke="#fff" stroke-width=".8" /></svg>
        <svg class="twf" viewBox="0 0 14 14" width="13" height="13" fill="none" stroke="#9895a2" stroke-width="1.100"><path d="M1 13A12 12 0 0 1 13 1M4 13a9 9 0 0 1 9-9" /><path d="M7 13a6 6 0 0 1 6-6M9.500 13a3.500 3.500 0 0 1 3.500-3.500" stroke="#d8d7de" /><circle cx="12.500" cy="12.500" r="1.500" fill="#fff" stroke="none" /></svg>
        <svg class="tvl" viewBox="0 0 17 14" width="17" height="14" fill="none" stroke="#fff" stroke-width="1.100"><path d="M.6 4.600h2.800L7 1.200v11.600L3.400 9.400H.6zM9 5c1 1 1 3 0 4M11 3c2.200 2 2.200 6 0 8M13 1c3.500 3 3.500 9 0 12" /></svg>
        <span class="eng"><span v-fit="23">ENG</span></span>
        <span class="clock"><span v-fit="43">4:02 PM</span><br /><span v-fit="52">7/31/2025</span></span>
        <span class="note"><svg viewBox="0 0 16 16" width="16" height="16"><path d="M0 0h16v12H8l-3 3v-3H0z" fill="#fff" /><path d="M3 3.500h10M3 6.500h10M3 9.200h6" stroke="#332e40" /></svg><em>5</em></span>
        <i class="edge"></i>
      </div>
    </div>
  </div>
</template>

<style>
body { margin: 0; overflow: hidden; }
</style>

<style scoped>
* { box-sizing: border-box; }
.screen { width: 1366px; height: 768px; display: flex; flex-direction: column; overflow: hidden; font-family: Inter, "Liberation Sans", sans-serif; white-space: nowrap; }
svg { flex: none; display: block; }
em, i { font-style: normal; }
span { flex: none; }

.tabstrip { height: 40px; background: #e4e3e8; display: flex; align-items: center; padding-left: 1px; font: 12px "Open Sans", "Noto Sans", sans-serif; color: #6f7076; flex: none; }
.btab { width: 82px; height: 16px; display: flex; align-items: center; padding-left: 15px; border-right: 1px solid #c9c8ce; flex: none; }
.btab:nth-child(-n+5) { width: 83px; }
.btab.pre { border-right: 0; }
.btab.on { background: #fff; height: 32px; width: 78px; margin: 0 2px; border: 0; border-radius: 8px; color: #333; padding-left: 13px; }
.btab.bare { padding-left: 14px; }
.fav { width: 16px; height: 16px; margin-right: 7px; }
.fav svg { width: 16px; height: 16px; }
.fav.github { color: #24262b; }
.blabel { width: 40px; letter-spacing: -.25px; line-height: 16px; -webkit-mask-image: linear-gradient(90deg, #000 55%, transparent 95%); mask-image: linear-gradient(90deg, #000 55%, transparent 95%); }
.bare .blabel { width: 60px; -webkit-mask-image: none; mask-image: none; letter-spacing: -.55px; }
.on .blabel { width: 12px; margin-right: 10px; -webkit-mask-image: none; mask-image: none; }
.bx { width: 8px; height: 8px; }
.newtab { width: 12px; height: 12px; margin-left: 13px; }
.winbtns { margin-left: auto; display: flex; gap: 34px; padding-right: 17px; }
.winbtns svg { width: 12px; height: 12px; }

.toolbar { height: 41px; background: #fff; display: flex; align-items: center; flex: none; color: #55565c; border-bottom: 1px solid #e6e8e8; }
.nav { display: flex; gap: 12px; padding-left: 13px; width: 221px; }
.dim { color: #b9b9be; }
.omni { margin-left: 14px; width: 798px; height: 32px; border-radius: 9px; background: #eeedf2; display: flex; align-items: center; padding-left: 9px; }
.addr { font: 14px "Open Sans", sans-serif; color: #4b4c53; width: 331px; margin-left: 14px; }
.addr b { font-weight: 400; color: #111; }
.k1 { margin-left: 228px; }
.k2 { margin-left: 17px; }
.k3 { margin-left: 16px; }
.k4 { margin-left: 17px; }
.bar { width: 1px; height: 16px; background: #aaaab0; margin: 0 11px 0 8px; }
.brave, .bat { position: relative; }
.brave { margin-left: -1px; }
.bat { margin-left: 17px; }
.brave em, .bat em { position: absolute; top: -3px; left: 10px; width: 12px; height: 12px; border-radius: 6px; background: #5f616b; color: #fff; font: 700 8px/12px Inter, sans-serif; text-align: center; }
.bat em { background: #fb542b; left: 11px; top: -4px; }
.tools { display: flex; align-items: center; margin-left: 85px; }
.tools i { width: 1px; height: 16px; background: #d8d8dd; margin: 0 15px 0 14px; }
.t2 { margin-left: 11px; }
.t4 { margin-left: 11px; }
.t5 { margin-left: 12px; }
.t6 { margin-left: 13px; }

.ide { height: 647px; background: #0e0f17; color: #e8e9ec; display: flex; flex-direction: column; flex: none; }
.idehead { height: 36px; display: flex; align-items: center; flex: none; }
.hl { width: 648px; display: flex; align-items: center; padding-left: 11px; color: #c8cad0; }
.logo { width: 15px; height: 15px; margin-left: 15px; border: 1px solid #33353e; border-radius: 3px; background: #1b1d25; display: grid; place-items: center; }
.logo i { width: 9px; height: 9px; border-radius: 5px; background: linear-gradient(110deg, #fff 55%, #555 60%); }
.proj { margin-left: 4px; font-size: 11.500px; font-weight: 500; color: #f4f5f6; }
.meter { width: 37px; height: 6px; border-radius: 3px; background: #1c2029; border: 1px solid #262a35; margin-left: 15px; overflow: hidden; }
.meter i { display: block; width: 4px; height: 4px; background: #0d5fae; }
.used { margin-left: 6px; font-size: 9.500px; color: #dcdde0; }
.run { display: flex; height: 24px; border-radius: 3px; overflow: hidden; }
.runmark { width: 19px; background: #2c2158; display: grid; place-items: center; }
.runtext { width: 51px; background: #5037c8; display: flex; align-items: center; justify-content: center; font-size: 11px; font-weight: 600; color: #e6e0fc; }
.hr { margin-left: auto; display: flex; align-items: center; color: #c8cad0; padding-right: 14px; font-size: 11.500px; }
.hbtn { height: 24px; background: #1a1c25; border-radius: 3px; display: flex; align-items: center; gap: 6px; padding-left: 7px; color: #eceded; }
.inv { width: 59px; margin-left: 12px; }
.dep { width: 65px; margin-left: 5px; }
.hb { margin: 0 0 0 10px; }
.kk { width: 18px; height: 18px; border-radius: 9px; background: #262932; color: #8c8f98; font-size: 7px; line-height: 18px; text-align: center; margin-left: 18px; }
.hc { margin-left: 2px; }

.work { display: flex; height: 605px; }
.rail { width: 36px; display: flex; flex-direction: column; align-items: center; color: #b9bbc2; }
.rbox { width: 24px; height: 24px; border: 1px solid #262932; border-radius: 3px; background: #171921; display: grid; place-items: center; }
.rlist { margin-top: 184px; flex: 1; width: 36px; }
.ri { height: 27px; width: 36px; display: grid; place-items: center; position: relative; }
.rlist .ri:first-child { height: 26px; margin-top: 0; }
.dot::before { content: ""; position: absolute; left: 8px; top: 12.500px; width: 2px; height: 2px; background: #9a9ca3; }
.rail hr { border: 0; height: 1px; background: #2b2e38; width: 18px; margin: 5px 9px 4px; }
.gold { color: #b8a04a; }
.blue { color: #9fb9dc; }
.leaf { color: #4cc76a; height: 26px; }
.grey { color: #85878e; height: 25px; }
.star { color: #fff; height: 24px; }
.rail > .ri:last-child { height: 24px; }

.pane { background: #1b1d25; border-radius: 4px; height: 605px; display: flex; flex-direction: column; overflow: hidden; }
.lpane { width: 528px; }
.gutter { width: 4px; display: flex; align-items: center; }
.gutter i { width: 1px; height: 18px; background: #343744; margin: 0 0 13px 2px; }
.rpane { width: 792px; }
.ptabs { height: 24px; background: #15171f; border-bottom: 1px solid #2b2e39; display: flex; flex: none; font-size: 10px; color: #aeb0b7; }
.pt { height: 24px; display: flex; align-items: center; gap: 4px; padding: 0 0 1px 5px; }
.cfg { width: 107px; border-right: 1px solid #2b2e39; }
.dimmer { color: #585b64; }
.agent { width: 70px; background: #1b1d25; border-top: 1px solid #0f6fd8; border-right: 1px solid #2b2e39; color: #f4f5f6; gap: 5px; font-weight: 500; padding-bottom: 2px; }
.pplus { width: 22px; height: 24px; display: grid; place-items: center; }
.con { width: 80px; border-right: 1px solid #2b2e39; padding-left: 6px; gap: 5px; height: 23px; padding-bottom: 0; }
.she { width: 65px; border-right: 1px solid #2b2e39; height: 23px; padding-bottom: 0; padding-left: 4px; }
.pre2 { width: 78px; background: #1b1d25; border-right: 1px solid #2b2e39; color: #f4f5f6; padding-left: 4px; }
.goldd { color: #7d7140; }
.shc { color: #536377; }
.kebab { margin-left: auto; width: 24px; display: flex; flex-direction: column; gap: 2px; align-items: center; justify-content: center; }
.kebab i { width: 1.500px; height: 2px; background: #9a9ca3; }

.chathead { margin: 6px 6px 0; height: 24px; border-radius: 3px; background: #22252e; display: flex; align-items: center; flex: none; color: #a4a6ad; padding: 0 8px 0 6px; font-size: 9.600px; position: relative; z-index: 1; }
.mid { flex: 1; display: flex; gap: 6px; justify-content: center; color: #f4f5f6; font-weight: 500; padding-left: 1px; }
.mid svg { color: #9b9da5; }
.chat { height: 435px; padding: 0 6px 0 5px; font-size: 11px; color: #c6c8cc; }
.cut { height: 16px; padding-left: 10px; color: #85888f; line-height: 10px; }
.step { height: 22px; display: flex; align-items: center; padding: 0 11px 0 11px; color: #b6b8be; }
.step > span { margin-left: 5px; }
.step .s2 { margin-left: 4px; }
.step code { font: 10.500px "DejaVu Sans Mono", monospace; margin-left: 3px; flex: none; }
.end { margin-left: auto; }
.check { margin: 6px 0 0 1px; height: 81px; border: 1px solid #27363b; border-radius: 5px; display: flex; padding: 9px 10px 0 9px; position: relative; }
.ok { color: #4cb46a; }
.cbody { margin-left: 6px; flex: 1; }
.clabel { font-size: 9.500px; height: 14px; line-height: 14px; color: #b6b8be; }
.ctitle { font-weight: 500; height: 22px; color: #dfe0e3; display: flex; align-items: center; gap: 5px; }
.ctitle svg { color: #62656e; }
.cbtns { display: flex; gap: 6px; margin-top: 4px; font-size: 10px; font-weight: 500; color: #e8e9ec; }
.b1, .b2 { height: 21px; border: 1px solid #303b41; border-radius: 3px; display: flex; align-items: center; gap: 3px; padding-left: 6px; }
.b1 { width: 81px; }
.b2 { width: 61px; }
.thumb { width: 73px; height: 52px; margin-top: 5px; }
.mins { margin: 6px 0 0 1px; height: 28px; border: 1px solid #272a34; border-radius: 5px; display: flex; align-items: center; padding: 0 7px 0 9px; font-size: 9.800px; font-weight: 500; gap: 6px; color: #b6b8be; }
.tip { margin: 12px 0 0 1px; height: 101px; border: 1px solid #0a4583; border-radius: 5px; background: linear-gradient(100deg, #142436, #1b1d25); display: flex; padding: 9px 10px 0 9px; }
.tip > svg:first-child { margin-left: -1px; margin-right: 1px; }
.tip > svg:last-child { margin-top: 3px; }
.tbody { margin-left: 5px; flex: 1; color: #e2e3e6; }
.tlabel { font-size: 9.500px; height: 14px; line-height: 14px; color: #b6b8be; }
.ttext { line-height: 17px; margin-top: 4px; height: 34px; }
.tbtn { margin-top: 5px; width: 67px; height: 24px; border: 1px solid #2f3542; border-radius: 3px; display: grid; place-items: center; }
.msg { margin: 15px 0 0; height: 126px; border-radius: 6px; background: #2b2745; padding: 6px 10px 0; color: #e2e1ea; }
.ml { height: 17px; line-height: 17px; display: flex; }
.ml i { width: 10px; font-family: "DejaVu Sans", sans-serif; font-size: 11px; }
.mp { margin-top: 12px; line-height: 16px; }
.compose { margin: 17px 6px 0; height: 93px; border: 1px solid #33363f; border-radius: 5px; background: #23262e; flex: none; color: #e2e3e6; font-size: 11px; }
.chead { height: 21px; border-bottom: 1px solid #33363f; display: flex; align-items: center; justify-content: space-between; padding: 0 8px 0 10px; font-size: 9.500px; color: #b6b8be; }
.res { display: flex; align-items: center; gap: 3px; font-weight: 600; color: #e8e9ec; }
.ctext { line-height: 16px; padding: 5px 8px 0; height: 48px; }
.cfoot { display: flex; align-items: center; gap: 11px; padding: 0 5px 0 6px; color: #989aa1; }
.send { margin-left: auto; width: 18px; height: 18px; border-radius: 3px; background: #0553a8; color: #d9e8f8; display: grid; place-items: center; }

.urlbar { height: 27px; display: flex; align-items: center; padding: 0 0 0 7px; color: #b4b6bc; border-bottom: 1px solid #24262f; flex: none; }
.urlbar > .r { margin: 0 10px 0 11px; color: #85878e; }
.url { width: 663px; flex: none; height: 18px; margin-left: 6px; background: #22252e; border-radius: 3px; display: flex; align-items: center; padding: 0 7px 0 3px; font-size: 10px; color: #e8e9ec; }
.lk, .host { color: #4cc76a; }
.host { width: 71px; }
.url > .go { margin-left: auto; color: #9a9ca3; }
.d1 { margin-left: 5px; }
.wr { position: relative; margin: 0 7px 0 7px; }
.d1, .wr, .ex { color: #8f9198; }
.wr em { position: absolute; left: 4px; top: -5px; width: 10px; height: 10px; border-radius: 5px; background: #f4565a; color: #1c1c22; font-size: 8px; line-height: 10px; text-align: center; }

.view { height: 554px; display: flex; background: #f5f6f8; font-family: Roboto, sans-serif; font-size: 12px; color: #212529; overflow: hidden; border-radius: 0 0 3px 0; }
.page { width: 777px; height: 554px; overflow: hidden; }
.topnav { height: 50px; background: #106e82; display: flex; align-items: center; color: #fff; box-shadow: 0 1px 4px rgba(0, 0, 0, .15); padding-left: 18px; padding-right: 19px; }
.p { font-size: 14px; width: 24px; flex: none; }
.brand { font-size: 15px; }
.ni { display: flex; align-items: center; gap: 5px; color: #dbe9ec; font-weight: 500; }
.n1 { margin-left: 17.500px; }
.n2, .n3, .n4 { margin-left: 11px; }
.ava { margin-left: auto; width: 27px; height: 27px; border-radius: 14px; background: linear-gradient(45deg, #6a11cb, #2575fc); font-weight: 700; text-align: center; line-height: 27px; font-size: 12.500px; }
.mail { margin-left: 5px; font-size: 12.500px; }
.caret { margin-left: 3px; border: 3px solid transparent; border-top: 3px solid #fff; border-bottom: 0; }
.phead { display: flex; justify-content: space-between; padding: 18px 9px 0; height: 94px; }
h2 { margin: 0; font-size: 23px; font-weight: 400; line-height: 27px; color: #2c2f33; }
.pbtns { width: 135px; display: flex; flex-direction: column; align-items: flex-end; font-size: 12.200px; color: #fff; }
.pb { height: 29px; border-radius: 4px; display: flex; align-items: center; padding-left: 10px; gap: 9px; color: #fff; }
.export { background: #4caf50; width: 116px; margin-right: 6px; }
.create { background: #106e82; width: 135px; }
.filters { margin: 0 9px; height: 94px; border-radius: 6px; background: #fff; box-shadow: 0 1px 3px rgba(0, 0, 0, .07); padding: 12px; display: grid; grid-template-columns: repeat(4, 1fr); gap: 12px; }
.sbox, .sel { height: 29px; border: 1px solid #dee2e6; border-radius: 4px; display: flex; align-items: center; }
.sbox > span { width: 31px; height: 27px; background: #f8f9fa; border-right: 1px solid #dee2e6; display: grid; place-items: center; border-radius: 4px 0 0 4px; }
.sbox label { padding-left: 9px; color: #6c7075; }
.sel { justify-content: space-between; padding: 0 9px; }
.card { width: 241px; margin: 18px 0 0 9px; background: #fff; height: 320px; box-shadow: 0 1px 3px rgba(0, 0, 0, .07); }
.pic { height: 150px; background: #f8f9fa; display: grid; place-items: center; color: #54585c; position: relative; }
.act { position: absolute; right: 8px; top: 8px; width: 42px; height: 15px; border-radius: 3px; background: #198754; color: #fff; font-weight: 700; font-size: 9.500px; display: grid; place-items: center; }
.cb { padding: 12px; display: flex; flex-direction: column; align-items: flex-start; }
h5 { margin: 0; font-size: 15px; font-weight: 500; line-height: 18px; }
.cat { height: 15px; margin-top: 8px; border-radius: 5px; background: #f8f9fa; width: 109px; display: flex; align-items: center; gap: 5px; padding-left: 5px; font-size: 9.500px; font-weight: 500; color: #111; }
.row { display: flex; align-items: center; gap: 9px; height: 14px; margin-top: 7px; padding-left: .5px; color: #2b2f33; font-size: 11px; }
.row svg { color: #54585c; }
.row.r2 { margin-top: 8px; }
.topic { margin-top: 8px; height: 19px; width: 69px; border-radius: 3px; background: #e5eff1; color: #197486; font-size: 9.500px; display: grid; place-items: center; }
.scroll { width: 15px; background: #fcfcfc; display: flex; flex-direction: column; align-items: center; }
.su { border: 4.500px solid transparent; border-bottom: 5px solid #858585; border-top: 0; margin-top: 6px; }
.thumbbar { width: 9px; height: 442px; border-radius: 5px; background: #8b8b8b; margin-top: 7px; }
.sd { border: 4.500px solid transparent; border-top: 5px solid #858585; border-bottom: 0; margin-top: auto; margin-bottom: 7px; }

.taskbar { height: 40px; flex: none; background: linear-gradient(90deg, #322d3e, #372f43 60%, #3a2e42 88%, #332d3f); display: flex; color: #fff; font-family: "Open Sans", "Noto Sans", sans-serif; }
.start { width: 48px; display: grid; place-items: center; }
.tsearch { width: 288px; background: #f2f2f2; border: 1px solid #cfcfcf; display: flex; align-items: center; color: #2c2c2c; font-size: 14.500px; padding-left: 11px; }
.ttype { margin-left: 10px; width: 171px; flex: none; }
.tb { width: 48px; display: grid; place-items: center; position: relative; }
.tv { width: 51px; padding-right: 3px; }
.onapp { background: #5c5867; border-bottom: 2px solid #76b9ed; }
.fo { padding-left: 4px; }
.wa { width: 52px; padding-left: 2px; }
.wa em { position: absolute; left: 22px; top: 18px; height: 17px; width: 27px; border-radius: 9px; background: #3b3b43; border: 1px solid #8b8b92; font: 700 11.500px/15px "Open Sans", sans-serif; text-align: center; letter-spacing: -.4px; }
.tray { margin-left: auto; display: flex; align-items: center; }
.ar { font: 13.500px "DejaVu Sans", "Noto Sans", sans-serif; margin-left: 9px; width: 37px; }
.tc { margin-left: 25px; }
.tbt { margin-left: 10px; }
.twf { margin-left: 11px; }
.tvl { margin-left: 8px; }
.eng { margin-left: 9px; font-size: 11.500px; width: 23px; }
.clock { width: 54px; margin-left: 12px; text-align: center; font-size: 11.500px; line-height: 18px; }
.note { margin-left: 17px; position: relative; }
.note em { position: absolute; left: 8px; top: 7px; width: 15px; height: 15px; border-radius: 8px; background: #3a3844; border: 1px solid #8b8b92; font: 700 10px/13px "Open Sans", sans-serif; text-align: center; }
.edge { width: 1px; height: 40px; background: #77737f; margin: 0 4px 0 20px; }
</style>
